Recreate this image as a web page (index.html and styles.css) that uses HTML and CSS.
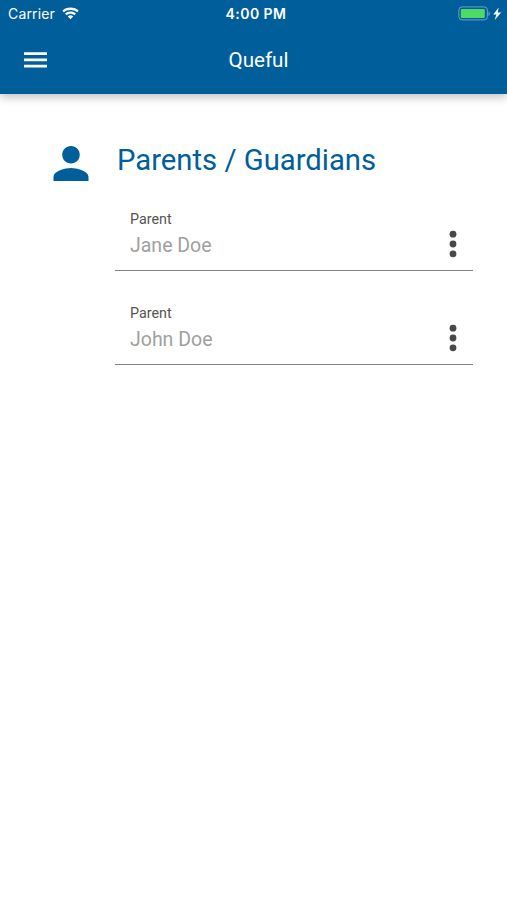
FILE: index.html
```html
<!DOCTYPE html>
<html lang="en">
<head>
<meta charset="utf-8">
<title>Queful</title>
<link rel="stylesheet" href="styles.css">
</head>
<body>
<header class="header">
  <div class="status">
    <div class="carrier"><span>Carrier</span>
      <svg class="wifi" viewBox="0 0 17 13"><path d="M8.500 .5C5.300.5 2.400 1.700.3 3.700L1.900 5.300C3.700 3.700 6 2.900 8.500 2.900s4.800.8 6.600 2.400l1.600-1.600C14.600 1.700 11.700.5 8.500.5ZM8.500 4.400c-2.100 0-4 .8-5.500 2.100l1.700 1.700c1-1 2.300-1.500 3.800-1.500s2.800.5 3.800 1.500L14 6.500C12.500 5.200 10.600 4.400 8.500 4.400ZM8.500 8.300c-1 0-2 .4-2.700 1.100l2.700 2.800 2.700-2.800c-.7-.7-1.700-1.100-2.700-1.100Z"/></svg>
    </div>
    <time class="time">4:00 PM</time>
    <svg class="battery" viewBox="0 0 44 16"><rect class="shell" x=".9" y=".9" width="28.500" height="13" rx="3.200"/><rect class="charge" x="2.800" y="3" width="24" height="9" rx="1"/><path class="tip" d="M30.500 5.500c1.800.6 1.800 3.800 0 4.400Z"/><path class="bolt" d="M40.700 1.500 35.200 8.500h3.200l-1.700 5.500L43.200 6.500h-3.500Z"/></svg>
  </div>
  <div class="toolbar">
    <svg class="menu" viewBox="0 0 24 16"><path d="M0 0h24v2.700H0ZM0 6.500h24v2.700H0ZM0 13h24v2.700H0Z"/></svg>
    <h1 class="title">Queful</h1>
  </div>
</header>
<main class="content">
  <svg class="person" viewBox="4 4 16 16"><path d="M12 12c2.210 0 4-1.790 4-4s-1.790-4-4-4-4 1.790-4 4 1.790 4 4 4zm0 2c-2.670 0-8 1.340-8 4v2h16v-2c0-2.660-5.330-4-8-4z"/></svg>
  <section class="group">
    <h2 class="heading">Parents / Guardians</h2>
    <div class="field">
      <div><div class="label">Parent</div><div class="value">Jane Doe</div></div>
      <svg class="more" viewBox="0 0 8 28"><circle cx="4" cy="4.200" r="3.400"/><circle cx="4" cy="14" r="3.400"/><circle cx="4" cy="23.800" r="3.400"/></svg>
    </div>
    <div class="field">
      <div><div class="label">Parent</div><div class="value">John Doe</div></div>
      <svg class="more" viewBox="0 0 8 28"><circle cx="4" cy="4.200" r="3.400"/><circle cx="4" cy="14" r="3.400"/><circle cx="4" cy="23.800" r="3.400"/></svg>
    </div>
  </section>
</main>
</body>
</html>
```
FILE: styles.css
```css
* { box-sizing: border-box; }
body { margin: 0; min-height: 900px; background: #fff; font-family: Roboto, sans-serif; }
svg { display: block; }
h1, h2 { margin: 0; font-weight: 400; }
.header { height: 94px; background: #005e9b; color: #fff; box-shadow: 0 3px 9px rgba(0,0,0,.25); }
.status { display: grid; grid-template-columns: 1fr auto 1fr; align-items: center; height: 27px; padding: 0 5px 0 8px; font-family: Inter, sans-serif; font-size: 14px; }
.carrier { display: flex; align-items: center; gap: 7px; letter-spacing: .15px; }
.wifi { width: 17px; height: 13px; fill: #fff; }
.time { font-weight: 600; letter-spacing: .45px; margin-left: 2px; }
.battery { width: 44px; height: 16px; justify-self: end; }
.shell { fill: none; stroke: #6f9fc4; }
.charge { fill: #4cd964; }
.tip { fill: #6f9fc4; }
.bolt { fill: #fff; }
.toolbar { display: grid; grid-template-columns: 1fr auto 1fr; align-items: center; height: 66px; padding: 0 19px 0 24px; }
.menu { width: 23px; height: 16px; fill: #fff; }
.title { font-size: 20.600px; margin-left: 5px; }
.content { display: flex; padding: 52px 34px 0 53px; }
.person { width: 36px; height: 35px; fill: #005e9b; }
.group { flex: 1; margin-left: 26px; }
.heading { margin-left: 2px; color: #005e9b; font-size: 29.250px; line-height: 28px; margin-bottom: 3px; }
.field { display: flex; justify-content: space-between; height: 94px; padding: 34px 16px 0 15px; border-bottom: 1px solid #828282; }
.label { color: #555; font-size: 14.300px; line-height: 16px; }
.value { color: #a0a0a0; font-size: 19.500px; line-height: 24px; margin-top: 7px; }
.more { width: 8px; height: 28px; margin-top: 19px; fill: #484848; }
```
